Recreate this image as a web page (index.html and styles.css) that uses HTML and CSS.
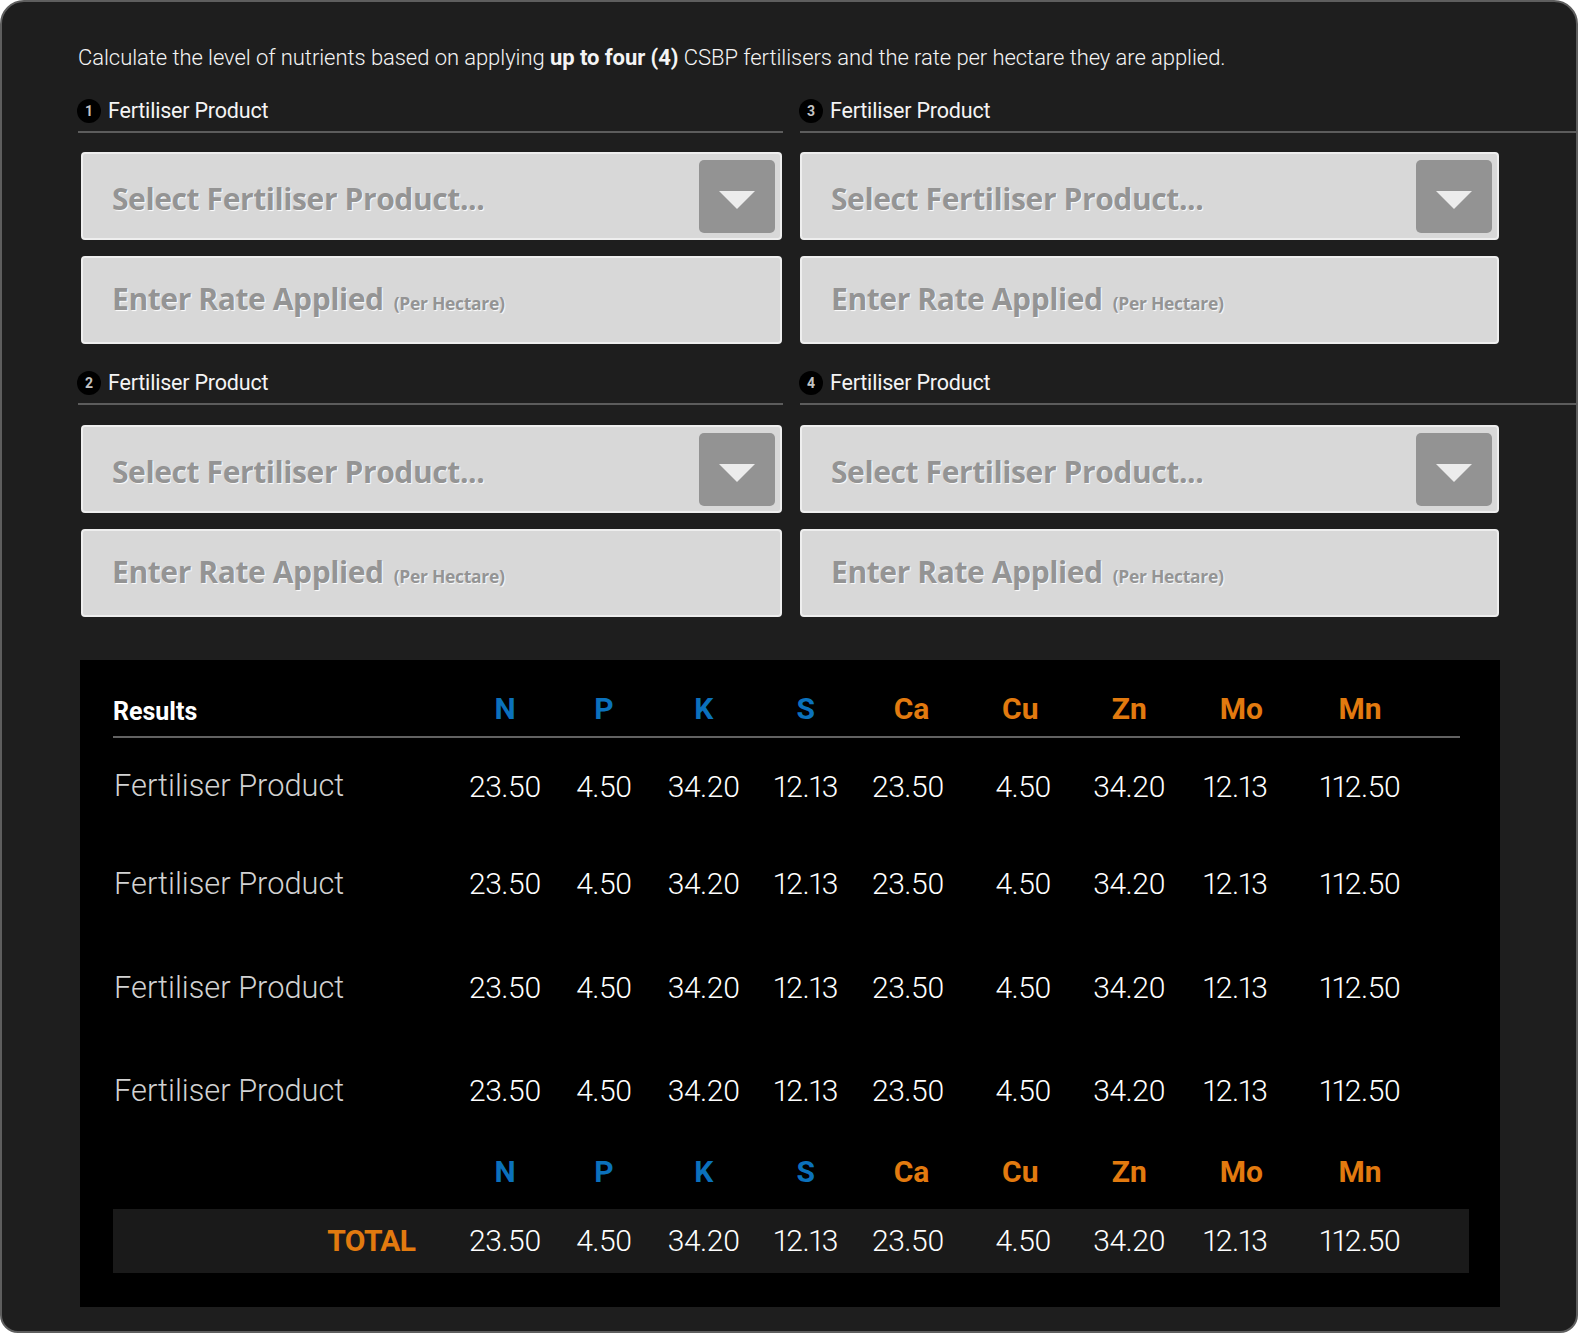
FILE: index.html
```html
<!DOCTYPE html>
<html lang="en">
<head>
<meta charset="utf-8">
<title>Nutrient Calculator</title>
<link rel="stylesheet" href="styles.css">
</head>
<body>
<div class="frame">
  <p class="intro">Calculate the level of nutrients based on applying <b>up to four (4)</b> CSBP fertilisers and the rate per hectare they are applied.</p>

  <div class="products">
    <div class="product">
      <div class="product-head"><span class="badge">1</span><span class="head-label">Fertiliser Product</span></div>
      <div class="field select"><span class="ph">Select Fertiliser Product...</span><span class="drop"><span class="tri"></span></span></div>
      <div class="field rate"><span class="ph">Enter Rate Applied</span><span class="ph-small">(Per Hectare)</span></div>
    </div>
    <div class="product product--right">
      <div class="product-head"><span class="badge">3</span><span class="head-label">Fertiliser Product</span></div>
      <div class="field select"><span class="ph">Select Fertiliser Product...</span><span class="drop"><span class="tri"></span></span></div>
      <div class="field rate"><span class="ph">Enter Rate Applied</span><span class="ph-small">(Per Hectare)</span></div>
    </div>
    <div class="product product--low">
      <div class="product-head"><span class="badge">2</span><span class="head-label">Fertiliser Product</span></div>
      <div class="field select"><span class="ph">Select Fertiliser Product...</span><span class="drop"><span class="tri"></span></span></div>
      <div class="field rate"><span class="ph">Enter Rate Applied</span><span class="ph-small">(Per Hectare)</span></div>
    </div>
    <div class="product product--right product--low">
      <div class="product-head"><span class="badge">4</span><span class="head-label">Fertiliser Product</span></div>
      <div class="field select"><span class="ph">Select Fertiliser Product...</span><span class="drop"><span class="tri"></span></span></div>
      <div class="field rate"><span class="ph">Enter Rate Applied</span><span class="ph-small">(Per Hectare)</span></div>
    </div>
  </div>

  <div class="results">
    <div class="row row--head">
      <span class="title">Results</span>
      <span class="el blue">N</span><span class="el blue">P</span><span class="el blue">K</span><span class="el blue">S</span>
      <span class="el orange">Ca</span><span class="el orange">Cu</span><span class="el orange">Zn</span><span class="el orange">Mo</span><span class="el orange">Mn</span>
    </div>
    <div class="row row--1">
      <span class="name">Fertiliser Product</span>
      <span class="val">23.50</span><span class="val">4.50</span><span class="val">34.20</span><span class="val">12.13</span><span class="val">23.50</span><span class="val">4.50</span><span class="val">34.20</span><span class="val">12.13</span><span class="val">112.50</span>
    </div>
    <div class="row row--2">
      <span class="name">Fertiliser Product</span>
      <span class="val">23.50</span><span class="val">4.50</span><span class="val">34.20</span><span class="val">12.13</span><span class="val">23.50</span><span class="val">4.50</span><span class="val">34.20</span><span class="val">12.13</span><span class="val">112.50</span>
    </div>
    <div class="row row--3">
      <span class="name">Fertiliser Product</span>
      <span class="val">23.50</span><span class="val">4.50</span><span class="val">34.20</span><span class="val">12.13</span><span class="val">23.50</span><span class="val">4.50</span><span class="val">34.20</span><span class="val">12.13</span><span class="val">112.50</span>
    </div>
    <div class="row row--4">
      <span class="name">Fertiliser Product</span>
      <span class="val">23.50</span><span class="val">4.50</span><span class="val">34.20</span><span class="val">12.13</span><span class="val">23.50</span><span class="val">4.50</span><span class="val">34.20</span><span class="val">12.13</span><span class="val">112.50</span>
    </div>
    <div class="row row--head2">
      <span></span>
      <span class="el blue">N</span><span class="el blue">P</span><span class="el blue">K</span><span class="el blue">S</span>
      <span class="el orange">Ca</span><span class="el orange">Cu</span><span class="el orange">Zn</span><span class="el orange">Mo</span><span class="el orange">Mn</span>
    </div>
    <div class="row row--total">
      <span class="total">TOTAL</span>
      <span class="val">23.50</span><span class="val">4.50</span><span class="val">34.20</span><span class="val">12.13</span><span class="val">23.50</span><span class="val">4.50</span><span class="val">34.20</span><span class="val">12.13</span><span class="val">112.50</span>
    </div>
  </div>
</div>
</body>
</html>
```

FILE: styles.css
```css
* { box-sizing: border-box; }

html, body {
  margin: 0;
  padding: 0;
  background: #ffffff;
}

body {
  font-family: Roboto, "Liberation Sans", Arial, sans-serif;
  color: #f2f2f2;
}

.frame {
  width: 1578px;
  height: 1333px;
  overflow: hidden;
  background: #1e1e1e;
  border: 2px solid #5e5e5e;
  border-radius: 24px 24px 18px 18px;
  padding: 43px 0 0 76px;
}

.intro {
  margin: 0;
  font-size: 22px;
  line-height: 26px;
  font-weight: 300;
  letter-spacing: -0.06px;
  color: #f4f4f4;
  white-space: nowrap;
}

.intro b {
  font-weight: 700;
}

.products {
  margin-top: 20px;
  display: grid;
  grid-template-columns: 705px 1fr;
  column-gap: 17px;
  row-gap: 19px;
}

.product-head {
  height: 42px;
  display: flex;
  align-items: center;
  gap: 7px;
  border-bottom: 2px solid #5c5c5c;
}

.badge {
  width: 24px;
  height: 24px;
  margin-left: -1px;
  border-radius: 50%;
  background: #000;
  color: #c4c4c4;
  font-size: 14px;
  font-weight: 700;
  display: flex;
  align-items: center;
  justify-content: center;
  line-height: 1;
}

.head-label {
  font-size: 21.5px;
  font-weight: 400;
  letter-spacing: -0.2px;
  color: #f4f4f4;
  line-height: 1;
}

.field {
  width: 701px;
  height: 88px;
  margin-left: 3px;
  background: #d8d8d8;
  border: 2px solid #eeeeee;
  border-radius: 4px;
  display: flex;
  align-items: center;
  padding-left: 29px;
  font-family: "Open Sans", "Noto Sans", sans-serif;
  font-weight: 700;
  color: #949494;
}

.product--right .field {
  width: 699px;
  margin-left: 0;
}

.select {
  margin-top: 19px;
  justify-content: space-between;
  padding-right: 5px;
}

.product--low .select {
  margin-top: 20px;
}

.rate {
  margin-top: 16px;
  align-items: baseline;
  padding-top: 26px;
}

.ph {
  font-size: 30px;
  line-height: 1;
  letter-spacing: -0.4px;
  text-shadow: 1px 1px 1px rgba(255, 255, 255, 0.95);
}

.select .ph {
  padding-top: 5px;
}

.ph-small {
  font-size: 17.5px;
  margin-left: 10px;
  letter-spacing: -0.3px;
  text-shadow: 1px 1px 1px rgba(255, 255, 255, 0.95);
}

.drop {
  width: 76px;
  height: 73px;
  border-radius: 5px;
  background: #939393;
  display: flex;
  align-items: center;
  justify-content: center;
}

.tri {
  width: 0;
  height: 0;
  margin-top: 7px;
  border-left: 18px solid transparent;
  border-right: 18px solid transparent;
  border-top: 18px solid #ececec;
}

.results {
  margin-top: 43px;
  margin-left: 2px;
  width: 1420px;
  height: 647px;
  background: #000;
  padding: 23px 31px 0 33px;
}

.row {
  display: grid;
  grid-template-columns: 342.5px 99px 99px 100.5px 103.5px 108px 109.5px 108.5px 115.5px 122px 1fr;
  align-items: center;
}

.row > span {
  line-height: 1;
}

.row--head {
  height: 55px;
  border-bottom: 2px solid #626262;
  margin-right: 9px;
}

.row--head .el,
.row--head .title {
  margin-bottom: 1px;
}

.row--1 { height: 97px; }
.row--2 { height: 98px; }
.row--3 { height: 110px; }
.row--4 { height: 96px; }
.row--head2 { height: 66px; }

.row--total {
  height: 64px;
  margin-top: 4px;
  background: #1a1a1a;
}

.title {
  font-size: 25px;
  font-weight: 700;
  color: #ffffff;
  padding-top: 4px;
}

.el {
  font-size: 30px;
  font-weight: 700;
  text-align: center;
}

.blue { color: #0b71bc; }
.orange { color: #e27a0f; }

.name {
  font-size: 30.8px;
  font-weight: 300;
  color: #d2d2d2;
  padding-left: 1px;
}

.val {
  font-size: 30px;
  font-weight: 300;
  color: #ffffff;
  text-align: center;
  letter-spacing: -0.5px;
  font-variant-numeric: proportional-nums;
}

.val:nth-child(6) { padding-right: 7px; }
.val:nth-child(7) { padding-left: 6px; }
.val:nth-child(9) { padding-right: 12px; }

.total {
  font-size: 30px;
  font-weight: 700;
  color: #e27a0f;
  text-align: right;
  padding-right: 40px;
  letter-spacing: -0.6px;
}
```
